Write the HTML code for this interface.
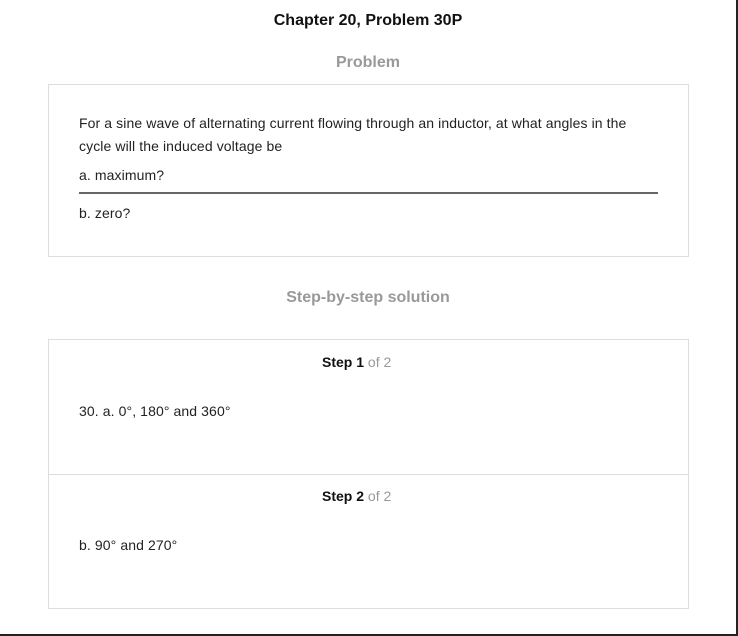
<!DOCTYPE html>
<html><head><style>
*{margin:0;padding:0;box-sizing:border-box}
body{width:738px;height:636px;background:#fff;font-family:"Liberation Sans",Arial,sans-serif;position:relative;overflow:hidden}
.frame{position:absolute;left:0;top:0;width:738px;height:636px;border-right:2px solid #222;border-bottom:2px solid #222}
.abs{position:absolute}
.c{left:0;width:736px;text-align:center}
.box{position:absolute;left:48px;width:641px;border:1px solid #ddd}
.t{font-size:14px;color:#222;position:absolute;left:79px;letter-spacing:0.1px;white-space:nowrap}
</style></head><body>
<div class="frame"></div>
<div class="abs c" style="top:12px;font-size:16px;font-weight:bold;color:#111">Chapter 20, Problem 30P</div>
<div class="abs c" style="top:54px;font-size:16px;font-weight:bold;color:#999">Problem</div>
<div class="box" style="top:84px;height:173px"></div>
<div class="t" style="top:115px">For a sine wave of alternating current flowing through an inductor, at what angles in the</div>
<div class="t" style="top:138px">cycle will the induced voltage be</div>
<div class="t" style="top:167px">a. maximum?</div>
<div class="abs" style="left:79px;top:192px;width:579px;height:2px;background:#666"></div>
<div class="t" style="top:205px">b. zero?</div>
<div class="abs c" style="top:289px;font-size:16px;font-weight:bold;color:#999">Step-by-step solution</div>
<div class="box" style="top:339px;height:270px"></div>
<div class="abs" style="left:49px;top:474px;width:639px;height:1px;background:#ddd"></div>
<div class="abs" style="left:322px;top:354px;font-size:14px;font-weight:bold;color:#111">Step 1 <span style="font-weight:normal;color:#999">of 2</span></div>
<div class="t" style="top:403px">30. a. 0°, 180° and 360°</div>
<div class="abs" style="left:322px;top:488px;font-size:14px;font-weight:bold;color:#111">Step 2 <span style="font-weight:normal;color:#999">of 2</span></div>
<div class="t" style="top:537px">b. 90° and 270°</div>
</body></html>
